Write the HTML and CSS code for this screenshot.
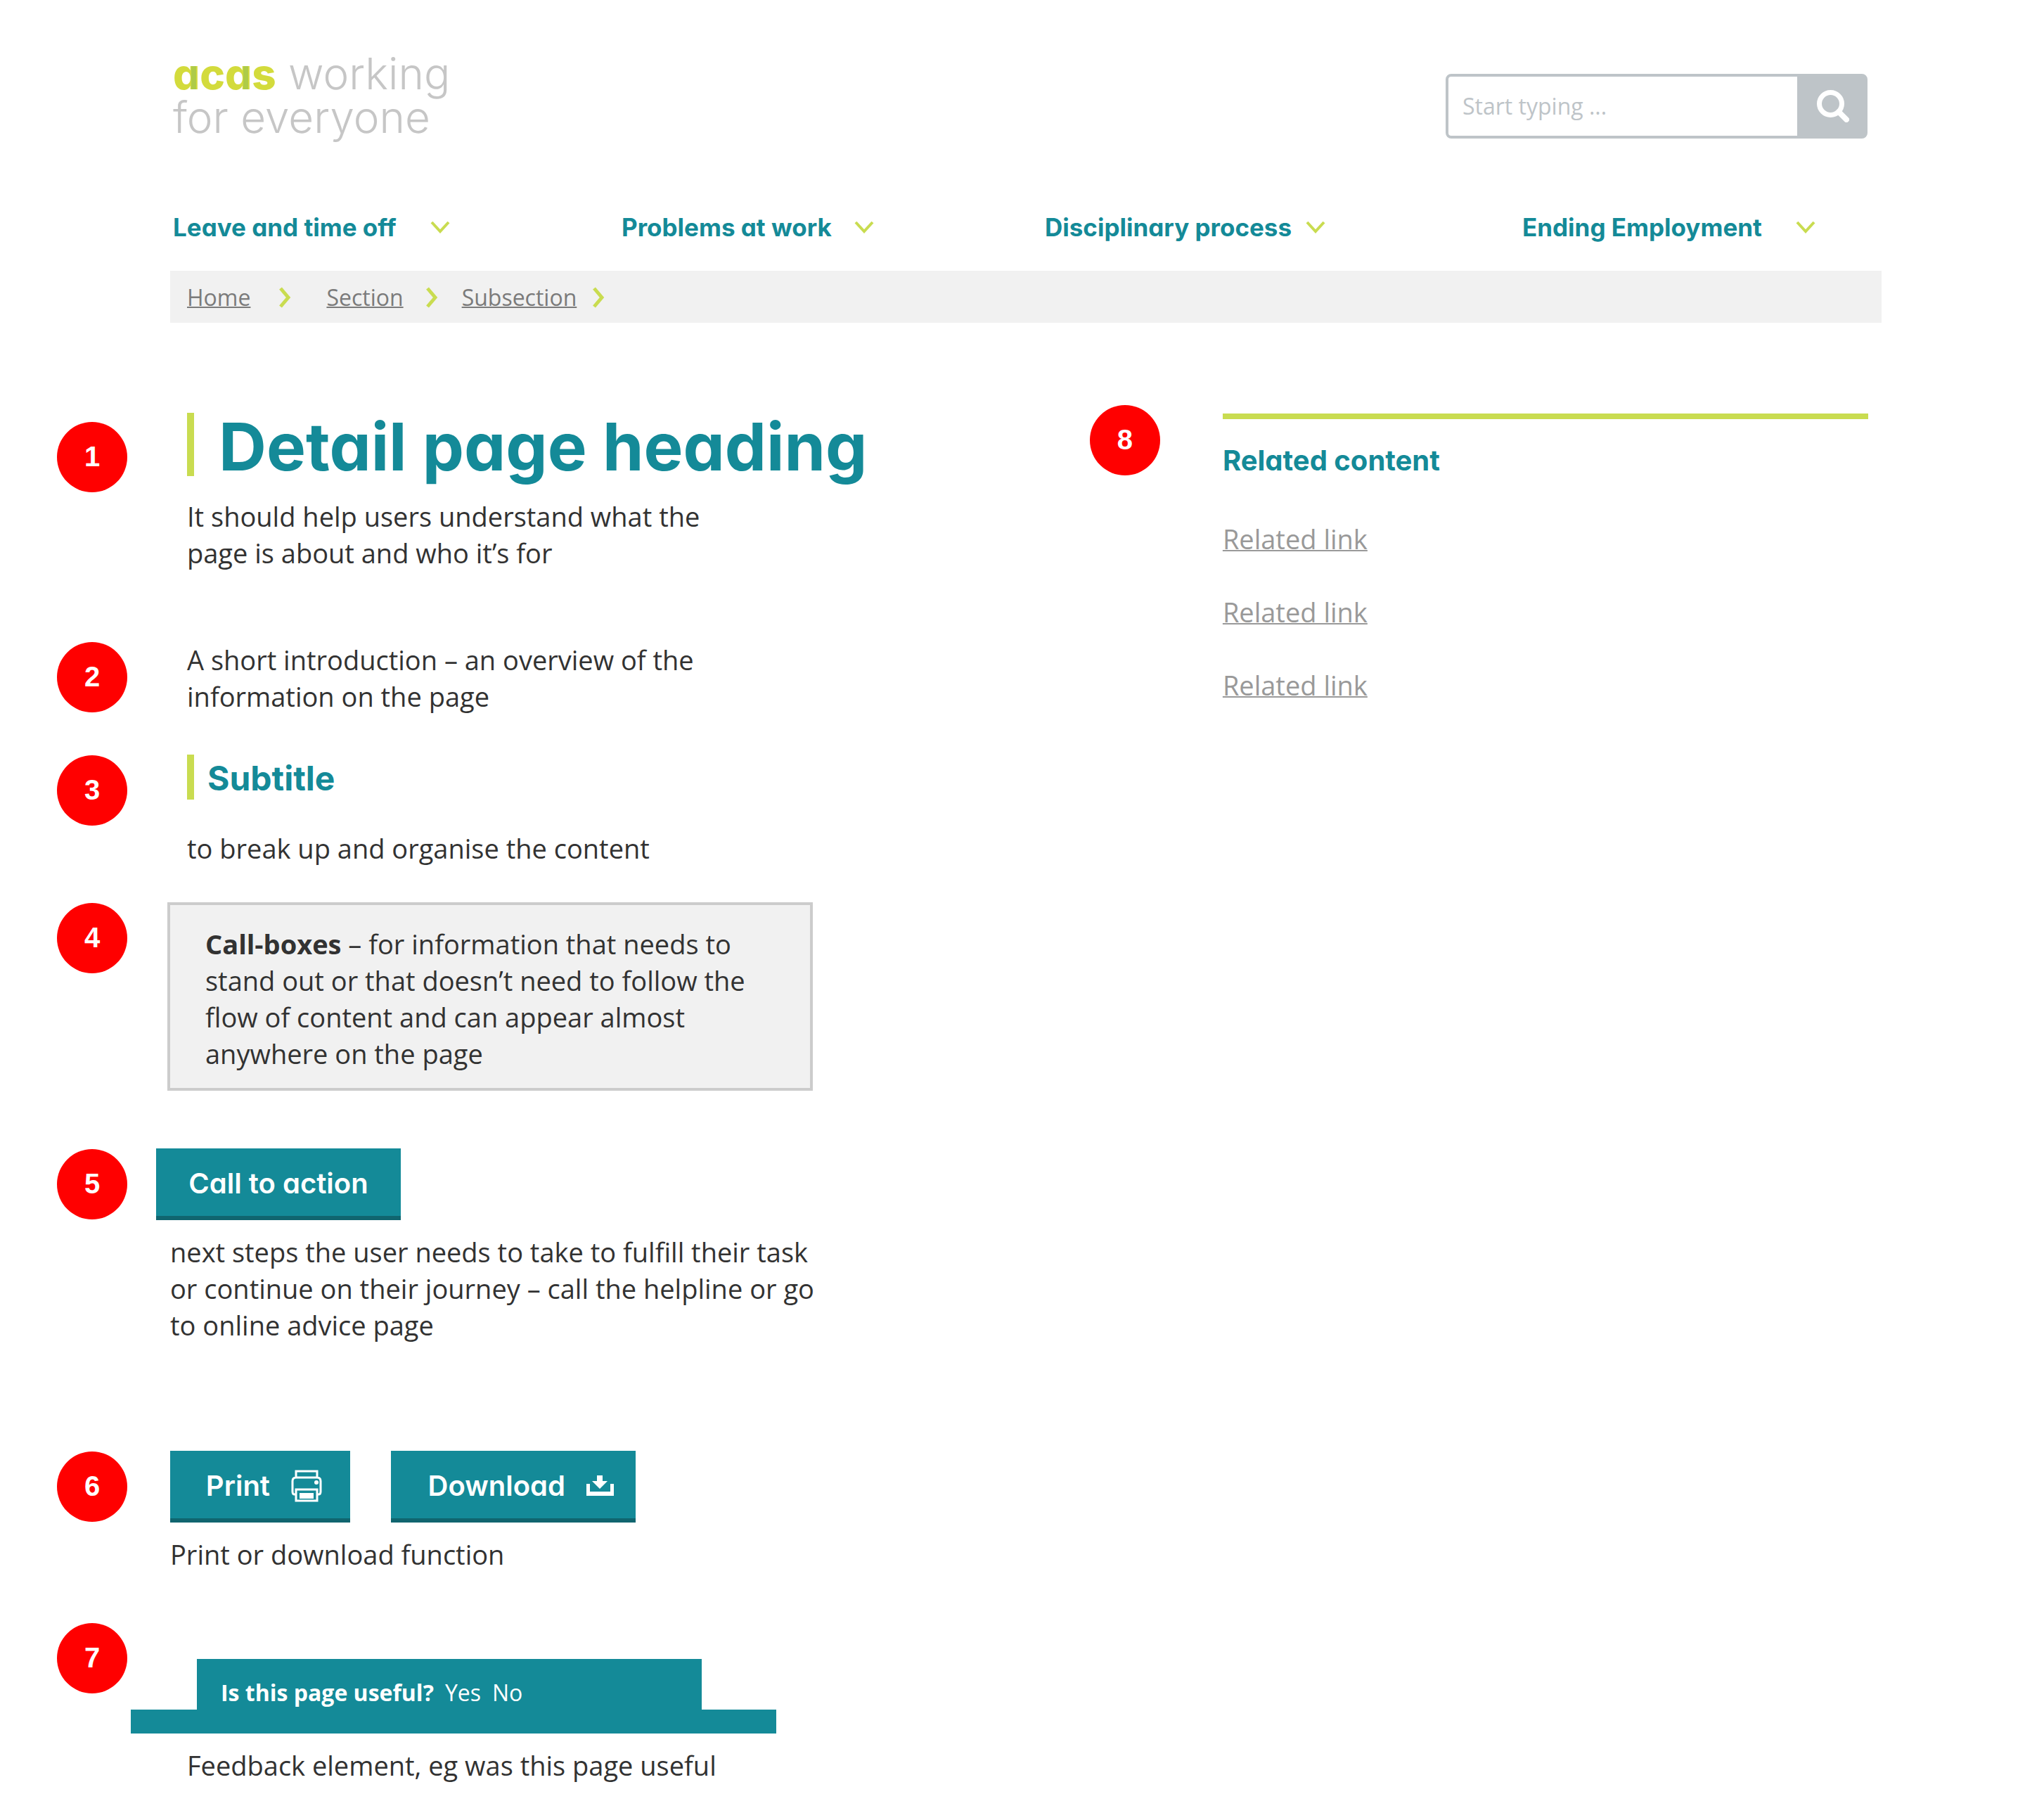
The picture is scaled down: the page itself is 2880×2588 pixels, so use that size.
FILE: index.html
```html
<!DOCTYPE html>
<html lang="en">
<head>
<meta charset="utf-8">
<meta name="viewport" content="width=device-width, initial-scale=1">
<title>Detail page | Acas</title>
<link rel="stylesheet" href="styles.css">
</head>
<body>
<header class="site-header">
  <div class="masthead">
    <a class="logo" href="#"><span class="logo-name"><span class="logo-a">a</span>c<span class="logo-a">a</span>s</span> working<br>for everyone</a>
    <form class="search" role="search">
      <input class="search-input" type="search" aria-label="Search" placeholder="Start typing ...">
      <button class="search-button" type="submit" aria-label="Search">
        <svg width="46" height="46" viewBox="0 0 46 46" fill="none" stroke="#fff" stroke-width="7"><circle cx="19.500" cy="19.500" r="16"/><path d="M31 31l11 11" stroke-width="8" stroke-linecap="round"/></svg>
      </button>
    </form>
  </div>
  <nav class="main-nav" aria-label="Main">
    <button class="nav-item nav-item-wide" type="button">Leave and time off <svg class="chevron-down" viewBox="0 0 28 18"><path d="M2 2l12 13L26 2"/></svg></button>
    <button class="nav-item" type="button">Problems at work <svg class="chevron-down" viewBox="0 0 28 18"><path d="M2 2l12 13L26 2"/></svg></button>
    <button class="nav-item nav-item-tight" type="button">Disciplinary process <svg class="chevron-down" viewBox="0 0 28 18"><path d="M2 2l12 13L26 2"/></svg></button>
    <button class="nav-item nav-item-wide" type="button">Ending Employment <svg class="chevron-down" viewBox="0 0 28 18"><path d="M2 2l12 13L26 2"/></svg></button>
  </nav>
  <nav aria-label="Breadcrumb">
    <ol class="breadcrumb">
      <li><a href="#">Home</a><svg class="chevron-right" viewBox="0 0 18 30"><path d="M3 2l11 13L3 28"/></svg></li>
      <li><a href="#">Section</a><svg class="chevron-right" viewBox="0 0 18 30"><path d="M3 2l11 13L3 28"/></svg></li>
      <li><a href="#">Subsection</a><svg class="chevron-right" viewBox="0 0 18 30"><path d="M3 2l11 13L3 28"/></svg></li>
    </ol>
  </nav>
</header>

<div class="layout">
  <main class="content">
    <section class="item item-heading">
      <span class="badge">1</span>
      <div class="indent">
        <h1>Detail page heading</h1>
        <p class="narrow">It should help users understand what the page is about and who it’s for</p>
      </div>
    </section>
    <section class="item item-intro">
      <span class="badge">2</span>
      <div class="indent">
        <p class="narrow">A short introduction – an overview of the information on the page</p>
      </div>
    </section>
    <section class="item item-subtitle">
      <span class="badge">3</span>
      <div class="indent">
        <h2 class="subtitle">Subtitle</h2>
        <p>to break up and organise the content</p>
      </div>
    </section>
    <section class="item item-callbox">
      <span class="badge">4</span>
      <div>
        <p class="callbox"><strong>Call-boxes</strong> – for information that needs to stand out or that doesn’t need to follow the flow of content and can appear almost anywhere on the page</p>
      </div>
    </section>
    <section class="item item-cta">
      <span class="badge">5</span>
      <div>
        <button class="button button-cta" type="button">Call to action</button>
        <p class="wide">next steps the user needs to take to fulfill their task or continue on their journey – call the helpline or go to online advice page</p>
      </div>
    </section>
    <section class="item item-tools">
      <span class="badge">6</span>
      <div>
        <div class="button-row">
          <button class="button button-print" type="button">Print
            <svg width="44" height="46" viewBox="0 0 44 46" fill="none" stroke="#fff" stroke-width="3"><path d="M7 11V2h30v9M7 35H5q-3 0-3-4V16q0-5 5-5h30q5 0 5 5v15q0 4-3 4h-2"/><path d="M7 28h30v16H7z"/><path d="M12 33h20v8H12z" fill="#fff" stroke="none"/><circle cx="36" cy="18" r="3" fill="#fff" stroke="none"/></svg>
          </button>
          <button class="button button-download" type="button">Download
            <svg width="39" height="29" viewBox="0 0 39 29" fill="#fff"><path d="M0 12h5v11h29V12h5v17H0z"/><path d="M15 0h8v8h7L19 19 8 8h7z"/></svg>
          </button>
        </div>
        <p>Print or download function</p>
      </div>
    </section>
    <section class="item item-feedback">
      <span class="badge">7</span>
      <div>
        <div class="feedback">
          <div class="feedback-tab"><strong>Is this page useful?</strong><a href="#">Yes</a><a href="#">No</a></div>
        </div>
        <p class="indent">Feedback element, eg was this page useful</p>
      </div>
    </section>
  </main>

  <aside class="sidebar">
    <span class="badge">8</span>
    <div class="related">
      <h2>Related content</h2>
      <ul>
        <li><a href="#">Related link</a></li>
        <li><a href="#">Related link</a></li>
        <li><a href="#">Related link</a></li>
      </ul>
    </div>
  </aside>
</div>
</body>
</html>
```
FILE: styles.css
```css
:root {
  --teal: #148a98;
  --teal-dark: #10656f;
  --lime: #c9dc50;
  --grey: #bec4c8;
  --panel: #f1f1f1;
  --text: #323232;
  --heading-font: Inter, "Liberation Sans", sans-serif;
}

* {
  box-sizing: border-box;
}

body {
  margin: 0;
  background: #fff;
  color: var(--text);
  font: 38px/52px "Open Sans", sans-serif;
}

h1, h2, p, ul, ol {
  margin: 0;
  padding: 0;
}

ul, ol {
  list-style: none;
}

h1, h2, button, .logo {
  font-family: var(--heading-font);
  font-feature-settings: "cv11";
  font-weight: 700;
}

h1, h2 {
  color: var(--teal);
}

button {
  margin: 0;
  padding: 0;
  border: 0;
  background: none;
}

svg {
  flex: none;
}

/* Header */
.site-header {
  padding: 74px 204px 0 242px;
}

.masthead {
  display: flex;
  justify-content: space-between;
  align-items: flex-end;
  padding: 0 20px 0 4px;
}

.logo {
  color: #c6c6c6;
  font-size: 62px;
  font-weight: 300;
  line-height: 61px;
  text-decoration: none;
}

.logo-name {
  color: #d3db3c;
  font-size: 60px;
  font-weight: 800;
}

.logo-a {
  background: linear-gradient(90deg, #d3db3c 68%, #aecb48 68%, #aecb48 88%, #d3db3c 88%);
  background-clip: text;
  color: transparent;
}

.search {
  display: flex;
  width: 600px;
  height: 92px;
  border: 4px solid var(--grey);
  border-radius: 8px;
  background: var(--grey);
}

.search-input {
  flex: 1;
  min-width: 0;
  padding: 0 20px;
  border: 0;
  border-radius: 4px 0 0 4px;
  background: #fff;
  color: var(--text);
  font: 32px/44px "Open Sans", sans-serif;
}

.search-input::placeholder {
  color: var(--grey);
}

.search-button {
  display: flex;
  justify-content: center;
  align-items: center;
  width: 96px;
  padding-left: 6px;
}

.main-nav {
  display: grid;
  grid-template-columns: 638fr 602fr 679fr 511fr;
  margin: 104px 0 40px;
  padding-left: 4px;
}

.nav-item {
  display: flex;
  align-items: center;
  gap: 32px;
  color: var(--teal);
  font-size: 35px;
  line-height: 44px;
  white-space: nowrap;
}

.nav-item-tight {
  gap: 20px;
}

.nav-item-wide {
  gap: 48px;
}

.chevron-down,
.chevron-right {
  fill: none;
  stroke: var(--lime);
  stroke-width: 4;
}

.chevron-down {
  width: 28px;
  height: 18px;
}

.chevron-right {
  width: 18px;
  height: 30px;
  stroke-width: 5;
}

.breadcrumb {
  display: flex;
  align-items: center;
  gap: 34px;
  height: 74px;
  padding: 2px 24px 0;
  background: var(--panel);
  font-size: 32px;
}

.breadcrumb li {
  display: flex;
  align-items: center;
  gap: 31px;
}

.breadcrumb li:first-child {
  gap: 40px;
  margin-right: 16px;
}

.breadcrumb li:last-child {
  gap: 22px;
}

.breadcrumb a {
  color: #7b7b7b;
  text-decoration-thickness: 2px;
}

/* Page body */
.layout {
  display: grid;
  grid-template-columns: 57fr 43fr;
  padding: 116px 223px 52px 80px;
}

.content {
  padding-top: 12px;
}

.item {
  display: grid;
  grid-template-columns: 102px 1fr;
  align-items: start;
  column-gap: 60px;
}

.badge {
  display: block;
  width: 100px;
  height: 100px;
  margin: 1px;
  border-radius: 50%;
  background: #f00;
  color: #fff;
  font: bold 40px/98px "Liberation Sans", Arial, sans-serif;
  text-align: center;
}

.indent {
  padding-left: 24px;
}

.narrow {
  max-width: 760px;
}

.wide {
  max-width: 940px;
}

.item-heading .badge {
  margin-top: 13px;
}

.item-intro {
  margin-top: 100px;
}

.item-subtitle {
  margin-top: 57px;
}

.item-callbox {
  margin-top: 51px;
}

.item-cta {
  margin-top: 82px;
}

.item-tools {
  margin-top: 153px;
}

.item-feedback {
  margin-top: 71px;
}

h1 {
  margin-bottom: 31px;
  padding: 6px 0 0 35px;
  border-left: 10px solid var(--lime);
  font-size: 94px;
  line-height: 84px;
}

.subtitle {
  margin-bottom: 43px;
  padding: 4px 0 0 19px;
  border-left: 10px solid var(--lime);
  font-size: 48px;
  line-height: 60px;
}

.callbox {
  max-width: 918px;
  margin-left: -4px;
  padding: 29px 50px 23px;
  border: 4px solid #ccc;
  background: var(--panel);
}

/* Buttons */
.button {
  display: flex;
  align-items: center;
  gap: 30px;
  height: 102px;
  margin-bottom: 19px;
  padding-top: 3px;
  border-bottom: 6px solid var(--teal-dark);
  background: var(--teal);
  color: #fff;
  font-size: 40px;
  font-weight: 600;
  line-height: 52px;
}

.button-cta {
  justify-content: center;
  width: 348px;
  margin-left: -20px;
}

.button-row {
  display: flex;
  gap: 58px;
}

.button-print {
  justify-content: flex-end;
  width: 256px;
  padding-right: 40px;
}

.button-download {
  justify-content: flex-end;
  width: 348px;
  padding-right: 31px;
}

/* Feedback strip */
.feedback {
  max-width: 918px;
  margin: 52px 0 19px -56px;
  padding: 0 106px 0 94px;
  border-bottom: 34px solid var(--teal);
}

.feedback-tab {
  display: flex;
  gap: 16px;
  height: 72px;
  padding: 22px 34px 0;
  background: var(--teal);
  color: #fff;
  font-size: 32px;
}

.feedback-tab a {
  color: inherit;
  text-decoration: none;
}

/* Sidebar */
.sidebar {
  display: grid;
  grid-template-columns: 102px 1fr;
  align-items: start;
  column-gap: 88px;
}

.related {
  margin-top: 13px;
  padding-top: 33px;
  border-top: 8px solid var(--lime);
}

.related h2 {
  margin-bottom: 59px;
  font-size: 40px;
  line-height: 52px;
}

.related li {
  margin-bottom: 52px;
}

.related a {
  color: #999;
  text-decoration-thickness: 2px;
}
```
